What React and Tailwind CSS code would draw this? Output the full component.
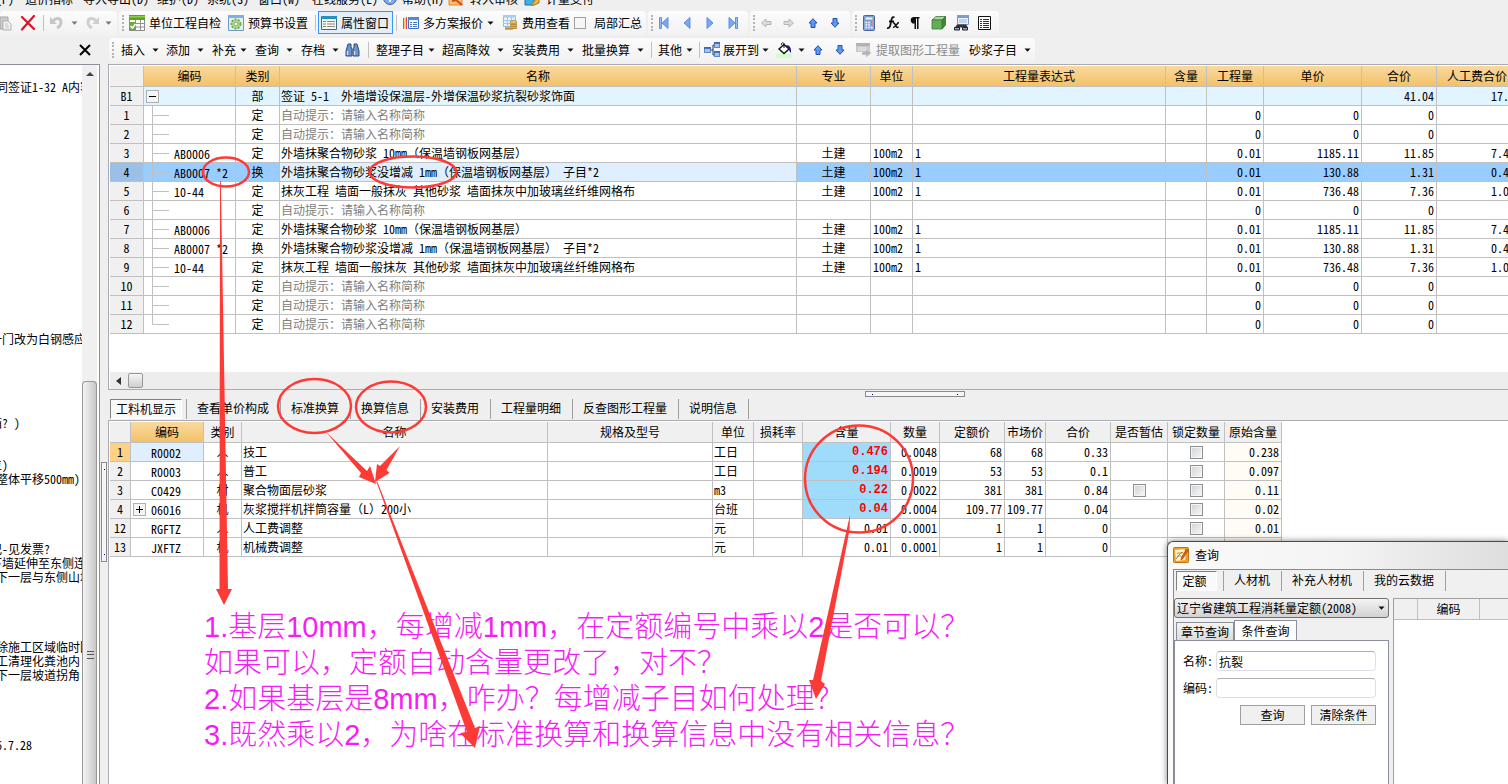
const NOTES = {
  1: " 同签证1-32 A内容",
  19: "一门改为白钢感应",
  25: "箱? )",
  28: "位)",
  29: " 整体平移500mm)",
  34: "记-见发票?",
  35: "下墙延伸至东侧连",
  36: " 下一层与东侧山墙",
  41: " 除施工区域临时围",
  42: " 工清理化粪池内:",
  43: " 下一层坡道拐角:",
  48: " 6.7.28",
};

const HINT = "自动提示：请输入名称简称";
const PLASTER = "外墙抹聚合物砂浆 10mm（保温墙钢板网基层）";
const PLASTER_ADD = "外墙抹聚合物砂浆没增减 1mm（保温墙钢板网基层） 子目*2";
const STUCCO = "抹灰工程 墙面一般抹灰 其他砂浆 墙面抹灰中加玻璃丝纤维网格布";

const empty = (no) => ({ no, kind: "定", name: HINT, hint: true, qty: "0", price: "0", total: "0", labor: "" });
const item = (no, code, kind, name, price, total, labor) => ({
  no, code, kind, name, major: "土建", unit: "100m2", expr: "1", qty: "0.01", price, total, labor,
});

const QUOTA_ROWS = [
  { no: "B1", kind: "部", name: "签证 5-1  外墙增设保温层-外增保温砂浆抗裂砂浆饰面", root: true, total: "41.04", labor: "17.1" },
  empty("1"),
  empty("2"),
  item("3", "AB0006", "定", PLASTER, "1185.11", "11.85", "7.42"),
  { ...item("4", "AB0007 *2", "换", PLASTER_ADD, "130.88", "1.31", "0.48"), selected: true },
  item("5", "10-44", "定", STUCCO, "736.48", "7.36", "1.03"),
  empty("6"),
  item("7", "AB0006", "定", PLASTER, "1185.11", "11.85", "7.42"),
  item("8", "AB0007 *2", "换", PLASTER_ADD, "130.88", "1.31", "0.48"),
  item("9", "10-44", "定", STUCCO, "736.48", "7.36", "1.03"),
  empty("10"),
  empty("11"),
  { ...empty("12"), last: true },
];

const QUOTA_COLS = [
  ["", "w-[34px]"], ["编码", "w-[92px]"], ["类别", "w-[44px]"], ["名称", "w-[517px]"],
  ["专业", "w-[74px]"], ["单位", "w-[42px]"], ["工程量表达式", "w-[253px]"], ["含量", "w-[41px]"],
  ["工程量", "w-[57px]"], ["单价", "w-[98px]"], ["合价", "w-[75px]"], ["人工费合价", "w-[81px]"],
];

const RES_COLS = [
  ["", "w-[21px]"], ["编码", "w-[73px]"], ["类别", "w-[38px]"], ["名称", "w-[306px]"],
  ["规格及型号", "w-[165px]"], ["单位", "w-[41px]"], ["损耗率", "w-[49px]"], ["含量", "w-[88px]"],
  ["数量", "w-[49px]"], ["定额价", "w-[65px]"], ["市场价", "w-[41px]"], ["合价", "w-[65px]"],
  ["是否暂估", "w-[57px]"], ["锁定数量", "w-[57px]"], ["原始含量", "w-[57px]"],
];

const RES_ROWS = [
  { no: "1", code: "R0002", kind: "人", name: "技工", unit: "工日", rate: "0.476", qty: "0.0048", quota: "68", market: "68", total: "0.33", orig: "0.238", red: true },
  { no: "2", code: "R0003", kind: "人", name: "普工", unit: "工日", rate: "0.194", qty: "0.0019", quota: "53", market: "53", total: "0.1", orig: "0.097", red: true },
  { no: "3", code: "C0429", kind: "材", name: "聚合物面层砂浆", unit: "m3", rate: "0.22", qty: "0.0022", quota: "381", market: "381", total: "0.84", orig: "0.11", red: true, estimate: true },
  { no: "4", code: "06016", kind: "机", name: "灰浆搅拌机拌筒容量（L）200小", unit: "台班", rate: "0.04", qty: "0.0004", quota: "109.77", market: "109.77", total: "0.04", orig: "0.02", red: true, plus: true },
  { no: "12", code: "RGFTZ", kind: "人", name: "人工费调整", unit: "元", rate: "0.01", qty: "0.0001", quota: "1", market: "1", total: "0", orig: "0.01" },
  { no: "13", code: "JXFTZ", kind: "机", name: "机械费调整", unit: "元", rate: "0.01", qty: "0.0001", quota: "1", market: "1", total: "0", orig: "0.01" },
];

/* ---------- icons ---------- */

function Svg({ w = 16, h = 16, children }) {
  return (
    <svg width={w} height={h} viewBox={`0 0 ${w} ${h}`} className="shrink-0" aria-hidden="true">
      {children}
    </svg>
  );
}

const Caret = ({ color = "#111" }) => (
  <Svg w={7} h={4}><path d="M0.5 0.5h6L3.5 3.8z" fill={color} /></Svg>
);

const PasteIcon = () => (
  <Svg w={12}>
    <path d="M0 2h8v12H0z" fill="#c9c9c9" stroke="#a9a9a9" />
    <path d="M3 6h5l3 3v6H3z" fill="#f4f4f4" stroke="#b0b0b0" />
    <path d="M5 9h3M5 11h4M5 13h4" stroke="#c4c4c4" />
  </Svg>
);
const DeleteIcon = () => (
  <Svg><path d="M2 2L14 14M14 1L2 14.500" stroke="#d8152c" strokeWidth="2.200" strokeLinecap="round" /></Svg>
);
const UndoIcon = () => (
  <Svg>
    <path d="M4 6c3-4 8-3 8 1 0 3-2 5-4 6" fill="none" stroke="#c6c6c6" strokeWidth="3" />
    <path d="M1 2v7h7z" fill="#c6c6c6" />
  </Svg>
);
const RedoIcon = () => (
  <Svg>
    <path d="M11 6C8 2 3 3 3 7c0 3 2 5 4 6" fill="none" stroke="#cfcfcf" strokeWidth="3" />
    <path d="M14 2v7H7z" fill="#cfcfcf" />
  </Svg>
);
const CheckSheetIcon = () => (
  <Svg>
    <path d="M0.500 0.500h15v15h-15z" fill="#fff" stroke="#8b8b8b" />
    <path d="M0 0h16v5H0z" fill="#5aa51e" />
    <path d="M0 1h16v1.500H0z" fill="#8fcb4a" />
    <path d="M6 8.500h10M6 12h10M6.500 5v11M11.500 5v11" stroke="#909090" />
    <path d="M0 7h7v8H0z" fill="#6cab35" />
    <path d="M1.500 11l2 2 3-4" fill="none" stroke="#fff" strokeWidth="1.500" />
  </Svg>
);
const GearSheetIcon = () => (
  <Svg>
    <path d="M0.500 0.500h15v15h-15z" fill="#e4eef7" stroke="#6d9bc9" />
    <path d="M0 0h16v3H0z" fill="#7fb0e0" />
    <circle cx="8" cy="9" r="4.500" fill="#bfe0a0" stroke="#6fae48" strokeWidth="2" strokeDasharray="2 1.200" />
    <circle cx="8" cy="9" r="2" fill="#fff" stroke="#6fae48" />
  </Svg>
);
const PropsIcon = () => (
  <Svg>
    <path d="M0.500 1.500h15v13h-15z" fill="#f7f7f2" stroke="#4d6675" />
    <path d="M0 1h16v3H0z" fill="#2592bd" />
    <path d="M2 6.500h3M2 9h3M2 11.500h3" stroke="#5f9b4f" />
    <path d="M6 6.500h8M6 9h8M6 11.500h8" stroke="#8a8a8a" />
  </Svg>
);
const SchemesIcon = () => (
  <Svg>
    <path d="M0.500 3v11" stroke="#3daa3d" />
    <path d="M2 2.500v11" stroke="#e8a01a" />
    <path d="M3.500 2v12" stroke="#e04a3a" />
    <path d="M5.500 2.500h10v11h-10z" fill="#f4f8ff" stroke="#3a6fc6" />
    <path d="M5 2h11v3H5z" fill="#4c88e0" />
    <path d="M7 7.500h2M7 9.500h2M7 11.500h2M10 7.500h4M10 9.500h4M10 11.500h4" stroke="#4c78c0" />
  </Svg>
);
const FeeIcon = () => (
  <Svg>
    <path d="M1.500 0.500h12v11h-12z" fill="#e8f3fc" stroke="#8fb9dd" />
    <path d="M1 0h13v2.500H1z" fill="#a6cdee" />
    <path d="M1 5.500h13M1 8.500h13M5.500 2v10M9.500 2v10" stroke="#a4c6e2" />
    <path d="M8 7h7v7H8z" fill="#d9ad5b" />
    <ellipse cx="11.500" cy="7" rx="3.500" ry="1.300" fill="#f2d58c" stroke="#a8782c" strokeWidth="0.700" />
    <path d="M3 12h8v3H3z" fill="#d9ad5b" />
    <path d="M8 9.500h7M8 11.500h7M3 13.500h12" stroke="#b58433" strokeWidth="0.800" />
  </Svg>
);

const FirstIcon = () => (
  <Svg w={10} h={12}><path d="M0.500 0.500h2v11h-2z" fill="#9bbcf5" stroke="#5e8fe6" /><path d="M9 0.500v11L3 6z" fill="#7da6f0" stroke="#5e8fe6" /></Svg>
);
const PrevIcon = () => <Svg w={8} h={12}><path d="M7 0.500v11L1 6z" fill="#7da6f0" stroke="#5e8fe6" /></Svg>;
const NextIcon = () => <Svg w={8} h={12}><path d="M1 0.500v11L7 6z" fill="#7da6f0" stroke="#5e8fe6" /></Svg>;
const LastIcon = () => (
  <Svg w={10} h={12}><path d="M7.500 0.500h2v11h-2z" fill="#9bbcf5" stroke="#5e8fe6" /><path d="M1 0.500v11L7 6z" fill="#7da6f0" stroke="#5e8fe6" /></Svg>
);
const LeftArrow = () => <Svg w={11} h={10}><path d="M0.500 5L5 1v2.500h5v3H5V9z" fill="#dcdcdc" stroke="#b5b5b5" /></Svg>;
const RightArrow = () => <Svg w={11} h={10}><path d="M10.500 5L6 1v2.500H1v3h5V9z" fill="#dcdcdc" stroke="#b5b5b5" /></Svg>;
const UpArrow = () => <Svg w={10} h={10}><path d="M5 0.700L9 5H7v4.500H3V5H1z" fill="#5b9bf5" stroke="#1f4fb5" /></Svg>;
const DownArrow = () => <Svg w={10} h={10}><path d="M5 9.300L9 5H7V0.500H3V5H1z" fill="#5b9bf5" stroke="#1f4fb5" /></Svg>;

const CalcIcon = () => (
  <Svg w={12}>
    <rect x="0.500" y="0.500" width="11" height="15" rx="1" fill="#8aa8dc" stroke="#4a659c" />
    <path d="M2 2h8v3H2z" fill="#e9f2fb" stroke="#5673a8" strokeWidth="0.600" />
    <path d="M2.500 7.500h7M2.500 10h7M2.500 12.500h7" stroke="#fff" strokeWidth="1.600" strokeDasharray="1.600 1.100" />
    <path d="M8 7.500h1.600M8 10h1.600" stroke="#e24a4a" strokeWidth="1.600" />
  </Svg>
);
const FxIcon = () => (
  <Svg w={14}>
    <path d="M8.500 2.500C6 1 5.500 4 5 7s-1 7-4 6M3 6.500h5" fill="none" stroke="#111" strokeWidth="1.800" />
    <path d="M7 8c3-1 2 6 5.500 4M13 7.500c-2 0-3 5-6 5" fill="none" stroke="#111" strokeWidth="1.600" />
  </Svg>
);
const PilcrowIcon = () => (
  <Svg w={11} h={14}><path d="M4.500 1h6v1.500H9.500V13H8V2.500H7V13H5.500V7.500a3.200 3.200 0 0 1-1-6.500z" fill="#111" /></Svg>
);
const CubeIcon = () => (
  <Svg w={15} h={15}>
    <path d="M1 5l4-3.500h9.500L11 5z" fill="#a8d89a" stroke="#3d7a35" strokeWidth="0.800" />
    <path d="M11 5l3.500-3.500V10L11 14z" fill="#3f8a39" stroke="#2f6a2a" strokeWidth="0.800" />
    <path d="M1 5h10v9H1z" fill="#63ad59" stroke="#3d7a35" strokeWidth="0.800" />
  </Svg>
);
const FindSheetIcon = () => (
  <Svg>
    <path d="M3.500 0.500h11v9h-11z" fill="#eaf1fb" stroke="#7d96c4" />
    <path d="M3 0h12v3H3z" fill="#7c9bd5" />
    <path d="M5 5h8M5 7h8" stroke="#9cb1d6" />
    <path d="M3 9.500h9l2 3H1z" fill="#333" />
    <path d="M0.500 12.500h5v2.500h-5zM8.500 12.500h5v2.500h-5z" fill="#8fa6c8" stroke="#222" />
  </Svg>
);
const ListIcon = () => (
  <Svg w={13} h={14}>
    <path d="M0.500 0.500h12v13h-12z" fill="#fff" stroke="#111" />
    <path d="M2 3.500h2M2 5.500h2M2 7.500h2M2 9.500h2M2 11.500h2M5 3.500h6M5 5.500h6M5 7.500h6M5 9.500h6M5 11.500h6" stroke="#2a2a8a" />
  </Svg>
);
const BinocularsIcon = () => (
  <Svg w={15} h={14}>
    <path d="M3 1h3v3l1 2v7H1V8z" fill="#6f93c8" stroke="#2b4a80" />
    <path d="M12 1H9v3L8 6v7h6V8z" fill="#6f93c8" stroke="#2b4a80" />
    <path d="M2.500 8v4M9.500 8v4" stroke="#cfe0f8" strokeWidth="1.300" />
  </Svg>
);
const TreeIcon = () => (
  <Svg>
    <path d="M6 8h3M9 3v10M9 3h3M9 13h3" stroke="#333" fill="none" />
    <rect x="0.500" y="5.500" width="6" height="5" fill="#9fc3f2" stroke="#5f87c4" />
    <rect x="10.500" y="0.500" width="5" height="5" fill="#9fc3f2" stroke="#5f87c4" />
    <rect x="10.500" y="9.500" width="5" height="5" fill="#9fc3f2" stroke="#5f87c4" />
    <path d="M0 6h7M10 1h6M10 10h6" stroke="#2f5fae" strokeWidth="1.500" />
  </Svg>
);
const BucketIcon = () => (
  <Svg>
    <path d="M0 12h16v4H0z" fill="#ccffcc" />
    <path d="M8 2.500L13 7l-5 4.500L3 7z" fill="#fff" stroke="#111" strokeWidth="1.400" />
    <path d="M8 6V1.500c-1-1.500-3-0.500-2.500 1.500" fill="none" stroke="#111" />
    <path d="M10 3c4 0 5.500 3 5 8-1.500-1-2-4-3-5z" fill="#1b1b8a" />
  </Svg>
);
const ExtractIcon = () => (
  <Svg>
    <path d="M0 1h14v9H0z" fill="#c9c9c9" />
    <path d="M0 1h14v3H0z" fill="#b2b2b2" />
    <path d="M2 6h9M2 8h9" stroke="#ececec" />
    <path d="M6 9h4V6.500l5.500 4.500-5.500 4.500V13H6z" fill="#b5b5b5" stroke="#e8e8e8" strokeWidth="0.600" />
  </Svg>
);
const AppIcon = () => (
  <Svg>
    <rect x="0.500" y="0.500" width="15" height="15" rx="1" fill="#f0a028" stroke="#c8700f" />
    <path d="M2 3l9-1 2 3-1 8-9 1z" fill="#fff3d4" />
    <path d="M3 12c2-3 3-5 7-7M4 6.500c2-1 3 0 5-1M4 9.500c2-1 3 0 4-1" stroke="#b87a2a" fill="none" />
    <path d="M13.500 2L8.500 10l-0.500 3L10 11.500 15 3.500z" fill="#d8660c" stroke="#8a3f05" strokeWidth="0.600" />
  </Svg>
);
const HelpIcon = () => (
  <Svg><circle cx="8" cy="7" r="6.500" fill="#7fa9e8" stroke="#2d5fb4" /><path d="M8 8v3" stroke="#fff" strokeWidth="2" /></Svg>
);
const AuditIcon = () => (
  <Svg><path d="M1 1h13v13H1z" fill="#f3c374" stroke="#e08a2c" /><path d="M4 10l4-1 6 5" fill="none" stroke="#d5481a" strokeWidth="2" /></Svg>
);
const MeterIcon = () => (
  <Svg><path d="M1 4h9v10H1z" fill="#3fb0e5" stroke="#1e6ea8" /><path d="M7 14l8-9v7l-5 2z" fill="#f3b53a" stroke="#a8741a" /></Svg>
);

/* ---------- toolbar parts ---------- */

function Strip({ className = "", grip = true, children }) {
  return (
    <div className={`flex h-[25px] shrink-0 items-center rounded-sm bg-gradient-to-b from-[#fcfcfc] to-[#f1f1f1] pb-0.5 ${className}`}>
      {grip && <div className="ml-[3px] h-4 shrink-0 border-l-2 border-dotted border-[#b4b4b4]" />}
      {children}
    </div>
  );
}

function Tool({ icon, label, title, caret, caretColor, className }) {
  return (
    <button type="button" aria-label={label ? undefined : title} className={`flex h-5 shrink-0 items-center whitespace-nowrap ${className}`}>
      {icon}
      {label && <span>{label}</span>}
      {caret && <Caret color={caretColor} />}
    </button>
  );
}

const Sep = ({ className }) => (
  <div className={`h-4 shrink-0 ${className}`}>
    <div className="h-4 w-px bg-[#c0c0c0]" />
  </div>
);

function Toolbars() {
  return (
    <header className="shrink-0 overflow-hidden pb-px">
      <nav className="h-[11px] overflow-hidden">
        <div className="-mt-[9px] flex items-center whitespace-nowrap leading-4">
          <a href="#" className="-ml-4 w-[41px]">件(P)</a>
          <a href="#" className="w-[58px]">造价指标</a>
          <a href="#" className="w-[74px]">导入导出(D)</a>
          <a href="#" className="w-[50px]">维护(D)</a>
          <a href="#" className="w-[51px]">系统(S)</a>
          <a href="#" className="w-[54px]">窗口(W)</a>
          <a href="#" className="w-[70px]">在线服务(L)</a>
          <a href="#" className="flex w-[66px] gap-1"><HelpIcon />帮助(H)</a>
          <a href="#" className="flex w-[76px] gap-1.5"><AuditIcon />转入审核</a>
          <a href="#" className="flex gap-1.5"><MeterIcon />计量支付</a>
        </div>
      </nav>

      <div className="flex gap-0.5">
        <Strip grip={false} className="w-[117px]">
          <Tool title="粘贴" icon={<PasteIcon />} className="w-5" />
          <Tool title="删除" icon={<DeleteIcon />} className="w-[23px]" />
          <Sep className="w-1.5" />
          <Tool title="撤销" icon={<UndoIcon />} caret caretColor="#777" className="w-9 gap-1.5" />
          <Tool title="重做" icon={<RedoIcon />} caret caretColor="#777" className="gap-1" />
        </Strip>
        <Strip className="w-[527px]">
          <Tool icon={<CheckSheetIcon />} label="单位工程自检" className="ml-[5px] w-[99px] gap-1" />
          <Tool icon={<GearSheetIcon />} label="预算书设置" className="w-[87px] gap-1" />
          <Sep className="w-[3px]" />
          <button type="button" className="flex h-[23px] w-[75px] shrink-0 items-center gap-1 whitespace-nowrap border border-[#3399ff] bg-[#e3eefb] pl-0.5">
            <PropsIcon />属性窗口
          </button>
          <Sep className="ml-[3px] w-[7px]" />
          <Tool icon={<SchemesIcon />} label="多方案报价" caret className="w-[99px] gap-1" />
          <Tool icon={<FeeIcon />} label="费用查看" className="w-[72px] gap-1" />
          <label className="flex shrink-0 items-center gap-2 whitespace-nowrap">
            <input type="checkbox" className="size-3 appearance-none border border-[#a0a0a0] bg-[#f6f6f6]" />
            局部汇总
          </label>
        </Strip>
        <Strip className="w-[100px]">
          <Tool title="首条" icon={<FirstIcon />} className="ml-1.5 w-6" />
          <Tool title="上一条" icon={<PrevIcon />} className="w-[23px]" />
          <Tool title="下一条" icon={<NextIcon />} className="w-[22px]" />
          <Tool title="末条" icon={<LastIcon />} />
        </Strip>
        <Strip className="w-[100px]">
          <Tool title="左移" icon={<LeftArrow />} className="ml-1.5 w-[22px]" />
          <Tool title="右移" icon={<RightArrow />} className="w-[25px]" />
          <Tool title="上移" icon={<UpArrow />} className="w-[22px]" />
          <Tool title="下移" icon={<DownArrow />} />
        </Strip>
        <Strip className="w-[147px]">
          <Tool title="计算器" icon={<CalcIcon />} className="ml-1.5 w-[23px]" />
          <Tool title="函数" icon={<FxIcon />} className="w-[23px]" />
          <Tool title="段落" icon={<PilcrowIcon />} className="w-[22px]" />
          <Tool title="三维" icon={<CubeIcon />} className="w-[23px]" />
          <Tool title="查找" icon={<FindSheetIcon />} className="w-6" />
          <Tool title="列表" icon={<ListIcon />} />
        </Strip>
      </div>

      <div className="mt-0.5 flex">
        <div className="flex w-[109px] shrink-0 items-center justify-end pb-0.5 pr-[18px]">
          <button type="button" aria-label="关闭">
            <Svg w={12} h={12}><path d="M1 1l10 10M11 1L1 11" stroke="#000" strokeWidth="2" /></Svg>
          </button>
        </div>
        <Strip className="w-[926px]">
          <Tool label="插入" caret className="ml-[7px] w-[45px] gap-[7px]" />
          <Tool label="添加" caret className="w-[46px] gap-[7px]" />
          <Tool label="补充" caret className="w-[43px] gap-1" />
          <Tool label="查询" caret className="w-[46px] gap-[7px]" />
          <Tool label="存档" caret className="w-[44px] gap-[7px]" />
          <Tool title="查找" icon={<BinocularsIcon />} className="w-[23px]" />
          <Sep className="w-2" />
          <Tool label="整理子目" caret className="w-[66px] gap-1" />
          <Tool label="超高降效" caret className="w-[70px] gap-[7px]" />
          <Tool label="安装费用" caret className="w-[70px] gap-[7px]" />
          <Tool label="批量换算" caret className="w-[69px] gap-[7px]" />
          <Sep className="w-[7px]" />
          <Tool label="其他" caret className="w-[41px] gap-1" />
          <Sep className="w-[5px]" />
          <Tool icon={<TreeIcon />} label="展开到" caret className="w-[72px] gap-[3px]" />
          <Tool title="填充颜色" icon={<BucketIcon />} caret className="w-[37px] gap-1.5" />
          <Tool title="上移" icon={<UpArrow />} className="w-[22px]" />
          <Tool title="下移" icon={<DownArrow />} className="w-[21px]" />
          <Tool icon={<ExtractIcon />} label="提取图形工程量" className="w-[113px] gap-1 text-[#8a8a8a]" />
          <Tool label="砂浆子目" caret className="gap-[7px]" />
        </Strip>
      </div>
    </header>
  );
}

/* ---------- left notes ---------- */

function NotesPanel() {
  const lines = Array.from({ length: 50 }, (_, i) => NOTES[i] ?? "");
  return (
    <aside className="flex w-[100px] shrink-0 overflow-hidden border-r border-t border-[#8b8f9c] bg-white">
      <div className="w-[82px] shrink-0 overflow-hidden pt-px">
        <div className="-ml-2.5 whitespace-pre">
          {lines.map((line, i) => (
            <div key={i} className="h-3.5 leading-[14px]">{line}</div>
          ))}
        </div>
      </div>
      <div className="flex w-[15px] flex-col bg-[#f0f0f0]">
        <div className="flex h-[18px] items-center justify-center">
          <Svg w={8} h={4}><path d="M0 4h8L4 0z" fill="#444" /></Svg>
        </div>
        <div className="mt-[298px] flex grow flex-col rounded-t-sm border border-b-0 border-[#979797] bg-gradient-to-r from-[#f4f4f4] to-[#c8c8c8] pl-1 pt-[269px]">
          <div className="h-2 w-[7px] border-y border-[#555]">
            <div className="mt-[2px] h-px bg-[#555]" />
          </div>
        </div>
      </div>
    </aside>
  );
}

/* ---------- upper grid ---------- */

const CELL = "overflow-hidden whitespace-pre border-b border-r border-[#c0c0c0] p-0";

function TreeCell({ row }) {
  if (row.root) {
    return (
      <div className="flex h-[18px] items-center pl-0.5">
        <button type="button" aria-label="折叠" className="flex size-[13px] items-center justify-center border border-[#b0b0b0] bg-[#f4f4f4]">
          <span className="h-px w-[7px] bg-black" />
        </button>
      </div>
    );
  }
  return (
    <div className="flex h-[18px] items-center gap-[5px]">
      <Svg w={25} h={18}>
        <path d={row.last ? "M8.500 0V9.500H25" : "M8.500 0V18M8.500 9.500H25"} fill="none" stroke="#c0c0c0" />
      </Svg>
      <span className="pt-px">{row.code}</span>
    </div>
  );
}

function QuotaGrid() {
  return (
    <section className="overflow-hidden border-b border-l border-t border-[#a9abb3] bg-white pl-px pt-px">
      <table className="w-[1408px] table-fixed border-separate border-spacing-0">
        <thead>
          <tr className="h-[21px]">
            {QUOTA_COLS.map(([label, width], i) => (
              <th
                key={i}
                className={`${CELL} ${width} text-center font-normal ${i === 0 ? "bg-[#f0f0f0]" : "bg-gradient-to-b from-[#f9d9a0] to-[#f3c267]"}`}
              >
                {label}
              </th>
            ))}
          </tr>
        </thead>
        <tbody>
          {QUOTA_ROWS.map((r) => {
            const bg = r.selected ? "bg-[#99ccff]" : r.root ? "bg-[#e1f4ff]" : "bg-white";
            return (
              <tr key={r.no} className={`h-[19px] ${bg}`}>
                <td className={`${CELL} text-center ${r.selected ? "bg-[#9bbfe6]" : "bg-[#f0f0f0]"}`}>{r.no}</td>
                <td className={CELL}><TreeCell row={r} /></td>
                <td className={`${CELL} text-center`}>{r.kind}</td>
                <td className={`${CELL} pl-px ${r.hint ? "text-[#808080]" : ""} ${r.selected ? "bg-[#e0efff]" : ""}`}>{r.name}</td>
                <td className={`${CELL} text-center`}>{r.major}</td>
                <td className={`${CELL} pl-0.5`}>{r.unit}</td>
                <td className={`${CELL} pl-0.5`}>{r.expr}</td>
                <td className={CELL} />
                <td className={`${CELL} pr-0.5 text-right`}>{r.qty}</td>
                <td className={`${CELL} pr-0.5 text-right`}>{r.price}</td>
                <td className={`${CELL} pr-0.5 text-right`}>{r.total}</td>
                <td className={`${CELL} pr-0.5 text-right`}>{r.labor}</td>
              </tr>
            );
          })}
        </tbody>
      </table>
      <div className="mt-[38px] flex h-[17px] items-center gap-1.5 bg-[#ededed] pl-1.5">
        <Svg w={5} h={8}><path d="M5 0v8L0 4z" fill="#333" /></Svg>
        <div className="ml-px size-[15px] rounded-xs border border-[#979797] bg-gradient-to-b from-[#f6f6f6] to-[#cfcfcf]" />
      </div>
    </section>
  );
}

/* ---------- lower grid ---------- */

function GridCheck({ label }) {
  return (
    <input
      type="checkbox"
      aria-label={label}
      className="mx-auto block size-[13px] appearance-none border border-[#8e8f8f] bg-gradient-to-br from-[#cfd3d8] to-[#f8f8f8] shadow-[inset_0_0_0_1px_#f4f4f4]"
    />
  );
}

const DETAIL_TABS = ["查看单价构成", "标准换算", "换算信息", "安装费用", "工程量明细", "反查图形工程量", "说明信息"];

function DetailTabs() {
  return (
    <div>
      <div className="h-2 pl-[757px] pt-px">
        <div className="flex h-1.5 w-[100px] items-center justify-between border border-[#8a8a8a] bg-[#f6f6f6] px-1.5">
          <span className="size-px bg-[#00007a]" />
          <span className="size-px bg-[#00007a]" />
        </div>
      </div>
      <div className="flex h-[22px] items-center pl-0.5">
        <button type="button" className="h-5 w-[72px] border border-b-white border-l-[#808080] border-r-white border-t-[#808080] bg-[#f9f9f9]">
          工料机显示
        </button>
        <div className="ml-1 h-5 w-px bg-[#a0a0a0]" />
        {DETAIL_TABS.map((t) => (
          <button key={t} type="button" className="h-5 whitespace-nowrap border-r border-[#a0a0a0] pb-0.5 pl-2.5 pr-[11px]">
            {t}
          </button>
        ))}
      </div>
    </div>
  );
}

function ResourceGrid() {
  return (
    <section className="grow overflow-hidden border-l border-t border-[#a9abb3] bg-white pl-px pt-px">
      <table className="w-[1172px] table-fixed border-separate border-spacing-0">
        <thead>
          <tr className="h-[21px]">
            {RES_COLS.map(([label, width], i) => (
              <th
                key={i}
                className={`${CELL} ${width} text-center font-normal ${i === 1 ? "bg-gradient-to-b from-[#f9d9a0] to-[#f3c267]" : "bg-[#f0f0f0]"}`}
              >
                {label}
              </th>
            ))}
          </tr>
        </thead>
        <tbody>
          {RES_ROWS.map((r, i) => (
            <tr key={r.no} className="h-[19px]">
              <td className={`${CELL} text-center ${i === 0 ? "bg-[#ffd185]" : "bg-[#f0f0f0]"}`}>{r.no}</td>
              <td className={`${CELL} ${i === 0 ? "bg-[#e0efff]" : ""}`}>
                <div className="flex h-[18px] items-center pl-0.5">
                  <span className="w-[18px]">
                    {r.plus && (
                      <button type="button" aria-label="展开" className="flex size-[13px] items-center justify-center border border-[#b0b0b0] bg-[#f4f4f4]">
                        <Svg w={7} h={7}><path d="M0 3.500h7M3.500 0v7" stroke="#000" /></Svg>
                      </button>
                    )}
                  </span>
                  <span className="pt-px">{r.code}</span>
                </div>
              </td>
              <td className={`${CELL} text-center`}>{r.kind}</td>
              <td className={`${CELL} pl-px`}>{r.name}</td>
              <td className={CELL} />
              <td className={`${CELL} pl-px`}>{r.unit}</td>
              <td className={CELL} />
              <td
                className={`${CELL} pr-0.5 text-right ${r.red ? "bg-[#9fdcfc] font-['Liberation_Mono',monospace] font-bold text-[#ff0000]" : ""}`}
              >
                {r.rate}
              </td>
              <td className={`${CELL} pr-0.5 text-right`}>{r.qty}</td>
              <td className={`${CELL} pr-0.5 text-right`}>{r.quota}</td>
              <td className={`${CELL} pr-0.5 text-right`}>{r.market}</td>
              <td className={`${CELL} pr-0.5 text-right`}>{r.total}</td>
              <td className={CELL}>{r.estimate && <GridCheck label={`是否暂估 ${r.no}`} />}</td>
              <td className={CELL}><GridCheck label={`锁定数量 ${r.no}`} /></td>
              <td className={`${CELL} bg-[#fffbf5] pr-0.5 text-right`}>{r.orig}</td>
            </tr>
          ))}
        </tbody>
      </table>
      <div className="mt-[52px] whitespace-nowrap pl-[94px] font-['Liberation_Sans','Noto_Sans_CJK_SC',sans-serif] text-[29px] font-light leading-9 text-[#f51df5]">
        <p>1.基层10mm，每增减1mm，在定额编号中乘以2是否可以？</p>
        <p>如果可以，定额自动含量更改了，对不？</p>
        <p>2.如果基层是8mm，咋办？每增减子目如何处理？</p>
        <p>3.既然乘以2，为啥在标准换算和换算信息中没有相关信息？</p>
      </div>
    </section>
  );
}

/* ---------- query window ---------- */

function QueryWindow() {
  return (
    <div className="absolute bottom-0 right-0 flex h-[243px] w-[341px] flex-col overflow-hidden rounded-tl-md border-l border-t border-[#4a4a4a] bg-gradient-to-r from-[#fafafa] via-[#f4f4f4] to-[#dedede] pl-[5px] shadow-[0_0_6px_rgba(0,0,0,0.5)]">
      <div className="flex h-[27px] shrink-0 items-center gap-1.5 pb-0.5">
        <AppIcon />
        <h2>查询</h2>
      </div>
      <div className="flex grow flex-col border-l border-t border-[#8a8a8a] bg-[#f0f0f0]">
        <div className="flex h-[22px] shrink-0 items-center pl-0.5">
          <button type="button" className="h-5 w-[41px] border border-b-white border-l-[#808080] border-r-white border-t-[#808080] bg-[#f9f9f9] pr-1">
            定额
          </button>
          <div className="ml-1.5 h-5 w-px bg-[#a0a0a0]" />
          {["人材机", "补充人材机", "我的云数据"].map((t) => (
            <button key={t} type="button" className="h-5 whitespace-nowrap border-r border-[#a0a0a0] pb-0.5 pl-2.5 pr-[11px]">{t}</button>
          ))}
        </div>
        <div className="flex grow pt-1.5">
          <div className="flex w-[215px] shrink-0 flex-col">
            <div className="relative">
              <select
                aria-label="定额库"
                className="block h-5 w-full appearance-none rounded-[3px] border border-[#707070] bg-gradient-to-b from-[#f4f4f4] to-[#d2d2d2] pl-0.5"
              >
                <option>辽宁省建筑工程消耗量定额(2008)</option>
              </select>
              <div className="pointer-events-none absolute right-1 top-2"><Caret /></div>
            </div>
            <div className="mt-0.5 flex items-end pl-0.5">
              <button type="button" className="h-[18px] w-[58px] border border-b-0 border-[#8b8f9c] bg-gradient-to-b from-[#f4f4f4] to-[#dcdcdc] leading-4">
                章节查询
              </button>
              <button type="button" className="h-5 w-[63px] border border-b-0 border-[#8b8f9c] bg-white leading-4">
                条件查询
              </button>
            </div>
            <form className="flex grow flex-col border-l border-r border-t border-[#8b8f9c] bg-white pl-2 pr-3 pt-2.5">
              <div className="flex items-center justify-between">
                <label htmlFor="q-name">名称:</label>
                <input id="q-name" defaultValue="抗裂" className="h-5 w-[160px] rounded-sm border border-[#dcdfe6] border-t-[#abadb3] pl-0.5" />
              </div>
              <div className="mt-[7px] flex items-center justify-between">
                <label htmlFor="q-code">编码:</label>
                <input id="q-code" className="h-5 w-[160px] rounded-sm border border-[#dcdfe6] border-t-[#abadb3] pl-0.5" />
              </div>
              <div className="mt-[7px] flex justify-end gap-1.5">
                <button type="button" className="h-5 w-[65px] border border-[#a0a0a0] bg-[#f0f0f0] leading-4">查询</button>
                <button type="button" className="h-5 w-[65px] border border-[#a0a0a0] bg-[#f0f0f0] leading-4">清除条件</button>
              </div>
            </form>
          </div>
          <div className="ml-1 grow border-l border-t border-[#a0a0a0] bg-white">
            <div className="flex h-[21px] border-b border-[#c0c0c0] bg-[#f0f0f0]">
              <div className="w-6 border-r border-[#c0c0c0]" />
              <div className="w-[62px] border-r border-[#c0c0c0] text-center leading-5">编码</div>
            </div>
          </div>
        </div>
      </div>
    </div>
  );
}

/* hand-drawn marks over the two grids */
function Marks() {
  return (
    <svg className="pointer-events-none absolute inset-0 size-full" aria-hidden="true">
      <g fill="none" stroke="#fc3a36" strokeWidth="2.500">
        <ellipse cx="226" cy="172" rx="23" ry="14.500" />
        <ellipse cx="413" cy="172" rx="43.500" ry="15.500" />
        <ellipse cx="314.500" cy="406" rx="36.500" ry="27" />
        <ellipse cx="391" cy="407" rx="35" ry="25.500" />
        <ellipse cx="859" cy="479" rx="54" ry="53.500" />
      </g>
      <g fill="#fc3a36">
        <path d="M220 181L220.800 181L228 589L232 589L224 605L216 589L219.500 589Z" />
        <path d="M326 432L367 471L370 466L376 484L359 477L361 473Z" />
        <path d="M400 446L386.500 470L389.500 473L375 482L377 464L380 466Z" />
        <path d="M376.500 482L377.500 482L475 728L480 726L475 748L460 733L467 732Z" />
        <path d="M850 515L849.500 530L821 681L825 684L816 699L809 680L813 680Z" />
      </g>
    </svg>
  );
}

export default function App() {
  return (
    <div className="relative flex h-screen flex-col overflow-hidden bg-[#efefef] font-['Noto_Sans_Mono_CJK_SC','Noto_Sans_CJK_SC',sans-serif] text-xs leading-[18px] text-black">
      <Toolbars />
      <main className="flex min-h-0 grow">
        <NotesPanel />
        <div className="w-2 shrink-0 pl-px">
          <div className="mt-[398px] flex h-[100px] w-1.5 flex-col items-center justify-between border border-[#8a8a8a] bg-[#f6f6f6] py-1.5">
            <span className="size-px bg-[#00007a]" />
            <span className="size-px bg-[#00007a]" />
          </div>
        </div>
        <div className="flex min-w-0 grow flex-col">
          <QuotaGrid />
          <DetailTabs />
          <ResourceGrid />
        </div>
      </main>
      <QueryWindow />
      <Marks />
    </div>
  );
}
